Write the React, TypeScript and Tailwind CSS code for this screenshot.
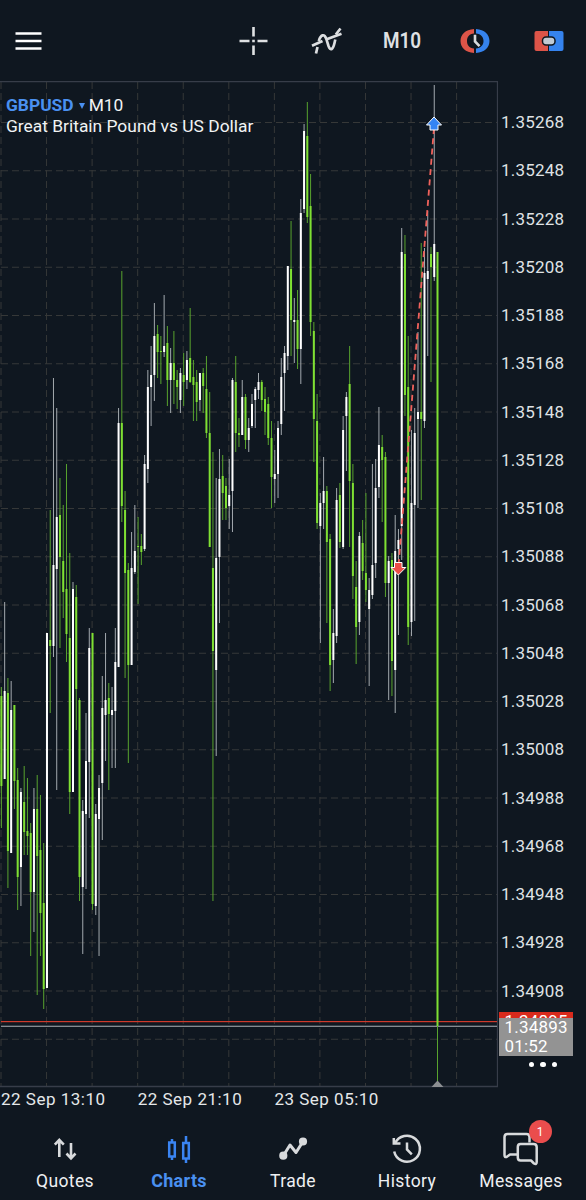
import type { ReactNode } from "react";

type Candle = ["up" | "down", number, number, number, number];

const U = "up";
const D = "down";

// side, high, body top, body bottom, low
const candles: Candle[] = [
  [D, 687, 696, 786, 828],
  [U, 602, 691, 779, 779],
  [D, 678, 693, 851, 888],
  [U, 681, 710, 853, 853],
  [D, 705, 705, 781, 809],
  [D, 768, 780, 877, 910],
  [U, 788, 792, 867, 906],
  [D, 766, 802, 832, 855],
  [D, 778, 831, 836, 855],
  [D, 823, 833, 892, 956],
  [U, 788, 809, 892, 932],
  [D, 775, 809, 856, 995],
  [D, 795, 850, 913, 956],
  [D, 843, 903, 989, 1009],
  [U, 633, 633, 988, 988],
  [D, 510, 640, 646, 713],
  [U, 378, 565, 646, 657],
  [U, 408, 517, 569, 790],
  [D, 478, 515, 557, 648],
  [D, 505, 561, 592, 618],
  [D, 464, 589, 634, 662],
  [D, 553, 638, 792, 814],
  [U, 582, 589, 792, 792],
  [D, 585, 597, 689, 730],
  [D, 698, 700, 877, 901],
  [U, 800, 811, 887, 954],
  [U, 713, 761, 814, 889],
  [U, 628, 648, 762, 818],
  [D, 633, 633, 904, 910],
  [U, 804, 814, 906, 915],
  [U, 775, 788, 819, 956],
  [U, 676, 708, 783, 840],
  [U, 633, 700, 715, 761],
  [D, 683, 698, 714, 790],
  [U, 687, 710, 715, 768],
  [U, 628, 662, 711, 768],
  [U, 408, 423, 667, 667],
  [D, 271, 423, 506, 522],
  [D, 491, 510, 573, 678],
  [D, 563, 570, 665, 763],
  [U, 532, 568, 665, 665],
  [U, 505, 551, 572, 574],
  [D, 517, 546, 547, 604],
  [D, 534, 546, 552, 565],
  [U, 455, 464, 549, 551],
  [U, 370, 387, 469, 483],
  [U, 346, 375, 387, 426],
  [U, 303, 336, 375, 401],
  [D, 325, 334, 352, 378],
  [D, 336, 351, 352, 384],
  [U, 295, 346, 352, 357],
  [D, 326, 343, 380, 406],
  [U, 348, 363, 380, 413],
  [D, 331, 363, 380, 404],
  [D, 370, 380, 387, 409],
  [U, 368, 373, 400, 413],
  [D, 353, 375, 382, 406],
  [U, 351, 360, 380, 389],
  [D, 308, 358, 382, 383],
  [D, 360, 377, 385, 421],
  [D, 370, 382, 402, 421],
  [U, 373, 373, 400, 411],
  [D, 368, 373, 386, 413],
  [D, 356, 389, 433, 438],
  [D, 392, 433, 547, 547],
  [D, 452, 568, 651, 901],
  [U, 478, 558, 670, 756],
  [U, 449, 479, 557, 623],
  [D, 455, 476, 493, 520],
  [D, 478, 486, 508, 520],
  [U, 459, 495, 506, 529],
  [U, 378, 380, 491, 532],
  [D, 356, 382, 433, 452],
  [D, 418, 433, 435, 447],
  [U, 380, 397, 435, 435],
  [D, 394, 397, 440, 449],
  [U, 418, 428, 440, 452],
  [U, 394, 404, 426, 428],
  [U, 387, 389, 400, 428],
  [U, 373, 382, 390, 399],
  [D, 380, 382, 400, 411],
  [D, 387, 399, 412, 435],
  [D, 397, 404, 438, 445],
  [D, 421, 438, 477, 508],
  [U, 450, 474, 479, 503],
  [U, 421, 428, 474, 498],
  [U, 358, 377, 424, 435],
  [U, 346, 353, 373, 411],
  [U, 266, 266, 356, 370],
  [D, 221, 269, 320, 356],
  [U, 298, 320, 322, 363],
  [D, 290, 320, 349, 369],
  [U, 199, 213, 349, 384],
  [U, 124, 131, 209, 213],
  [D, 102, 136, 217, 223],
  [D, 174, 206, 322, 336],
  [D, 322, 331, 419, 462],
  [D, 394, 421, 523, 529],
  [U, 493, 503, 526, 643],
  [U, 457, 491, 503, 529],
  [D, 486, 491, 542, 623],
  [D, 534, 539, 665, 691],
  [U, 609, 633, 660, 683],
  [U, 488, 500, 636, 643],
  [D, 483, 495, 542, 548],
  [U, 416, 430, 547, 549],
  [U, 392, 397, 416, 471],
  [D, 346, 384, 481, 547],
  [D, 464, 483, 576, 599],
  [D, 561, 587, 627, 664],
  [U, 532, 536, 622, 635],
  [D, 520, 543, 571, 580],
  [D, 493, 573, 590, 602],
  [U, 578, 590, 609, 686],
  [U, 464, 565, 595, 599],
  [U, 459, 488, 563, 578],
  [U, 407, 445, 487, 498],
  [D, 435, 447, 460, 522],
  [D, 452, 457, 583, 597],
  [U, 556, 561, 583, 700],
  [D, 553, 560, 661, 696],
  [U, 515, 551, 670, 713],
  [U, 529, 540, 549, 635],
  [U, 228, 252, 526, 560],
  [D, 235, 254, 395, 416],
  [D, 336, 387, 627, 645],
  [U, 430, 503, 622, 636],
  [U, 408, 433, 505, 621],
  [U, 332, 412, 419, 508],
  [D, 243, 412, 419, 500],
  [U, 248, 273, 421, 428],
  [U, 211, 271, 279, 356],
  [D, 247, 254, 267, 382],
  [U, 85, 244, 277, 281],
  [D, 252, 252, 1026, 1086],
];

const FIRST_X = 1.4;
const STEP = 3.2545;

const prices = Array.from({ length: 19 }, (_, i) => (1.35268 - i * 0.0002).toFixed(5));
const times = ["22 Sep 13:10", "22 Sep 21:10", "23 Sep 05:10"];

function Chart() {
  return (
    <svg width="498" height="1008" viewBox="0 81 498 1008" className="block shrink-0">
      <g stroke="#363838" strokeWidth="1" strokeDasharray="7 4">
        {Array.from({ length: 11 }, (_, i) => (
          <line key={i} x1={1 + i * 45.56} x2={1 + i * 45.56} y1="82" y2="1087" />
        ))}
        {Array.from({ length: 20 }, (_, i) => (
          <line key={i} x1="1" x2="497" y1={122.5 + i * 48.25} y2={122.5 + i * 48.25} />
        ))}
      </g>
      <path d="M0 81.5H497.5V1086.5H0" fill="none" stroke="#373d49" strokeWidth="1.3" />
      <rect x="1" y="1021" width="496" height="1.200" fill="#d03a2c" />
      <rect x="1" y="1025.700" width="496" height="1.200" fill="#939a9f" />

      {candles.map(([side, high, top, bottom, low], i) => {
        const x = FIRST_X + i * STEP;
        const up = side === "up";
        return (
          <g key={i}>
            <rect x={x - 0.5} y={high} width="1" height={low - high} fill={up ? "#a3a9ae" : "#58a32e"} />
            <rect
              x={x - 1}
              y={top}
              width="2"
              height={Math.max(bottom - top, 1)}
              fill={up ? "#ffffff" : "#7fe033"}
            />
          </g>
        );
      })}

      <path d="M434 128L398.5 566" stroke="#f0625c" strokeWidth="1.8" strokeDasharray="6 4.300" />
      <path
        d="M434 117L441.5 125H438V130H430V125H426.500Z"
        fill="#3384f4"
        stroke="#fff"
        strokeWidth="1"
      />
      <path
        d="M398.300 575L391 567.500H394.500V562.500H402V567.500H405.800Z"
        fill="#ee4e48"
        stroke="#fff"
        strokeWidth="1"
      />
      <path d="M437.500 1080.500L443.500 1087H431.500Z" fill="#8c8f92" />
    </svg>
  );
}

function Header() {
  return (
    <header className="relative h-[81px] shrink-0">
      <svg width="586" height="81" viewBox="0 0 586 81" fill="none" className="block">
        <path d="M15.500 33.500H41.500M15.500 41H41.500M15.500 48.500H41.500" stroke="#fff" strokeWidth="2.700" />
        <path
          d="M253.500 27V36.500M253.500 45.500V55M239.500 41H249.500M257.500 41H267.500M252.200 41H254.800"
          stroke="#dfe1e3"
          strokeWidth="2.600"
        />
        {/* indicators */}
        <g stroke="#dcdee0" strokeWidth="2.700">
          <path d="M312 45.800L322.500 41M326 39.600L341.500 33.800" />
          <path d="M316 53.500L317.500 47M318.800 41C320.500 35 324.500 32.500 326.500 39.500L328.500 46C330.500 51.500 333 49.500 334.500 43L335.300 39.500M335.800 34.500L340.500 28.500" />
        </g>
        {/* pending order clock */}
        <path d="M474 29V33.500C469 34 467 37 467 41S469 48 474 48.500V53C465.500 52.500 460.500 47.500 460.500 41S465.500 29.500 474 29Z" fill="#dd5448" />
        <path d="M476 29V33.500C481 34 483.500 37 483.500 41S481 48 476 48.500V53C484.500 52.500 489.500 47.500 489.500 41S484.500 29.500 476 29Z" fill="#3583ee" />
        <path d="M475 34.800V41.500L479.500 46.200" stroke="#d7dadd" strokeWidth="2.600" />
        {/* one click trading */}
        <path d="M536.500 31H548V51H536.500Q534.500 51 534.500 49V33Q534.500 31 536.500 31Z" fill="#dd5448" />
        <path d="M549 31H561.500Q563.500 31 563.500 33V49Q563.500 51 561.500 51H549Z" fill="#3583ee" />
        <rect x="542.500" y="37" width="12.500" height="8" rx="3.500" fill="#c1cad4" stroke="#0f1720" strokeWidth="1.500" />
      </svg>
      <span className="absolute left-[382.500px] top-[27px] origin-left scale-x-[0.88] text-[21.500px] leading-7 font-semibold text-[#dfe1e3]">
        M10
      </span>
    </header>
  );
}

function TabIcon({ children }: { children: ReactNode }) {
  return (
    <svg width="44" height="34" viewBox="-22 -17 44 34" fill="none" className="block">
      {children}
    </svg>
  );
}

const tabs = [
  {
    label: "Quotes",
    icon: (
      <path
        d="M-5.700 8V-8.500M-10.200-4.300L-5.700-9L-1.200-4.300M6-6V9M1.500 4.500L6 9.300L10.500 4.500"
        stroke="#d8dadc"
        strokeWidth="2.600"
      />
    ),
  },
  {
    label: "Charts",
    active: true,
    icon: (
      <g stroke="#3a84f2" strokeWidth="2.500">
        <path d="M-9.800-6.500H-4.200V7.500H-9.800ZM-7-10V-6.500M-7 7.500V11" />
        <path d="M4.200-6H9.800V9.500H4.200ZM7-13V-6M7 9.500V14" />
      </g>
    ),
  },
  {
    label: "Trade",
    icon: (
      <g stroke="#d8dadc" strokeWidth="3" strokeLinejoin="round">
        <path d="M-9.700 6.700L-3-4L3 3.500L10-7.500" />
        <circle cx="-9.700" cy="6.700" r="2.600" fill="#d8dadc" />
        <circle cx="10" cy="-7.500" r="2.600" fill="#d8dadc" />
      </g>
    ),
  },
  {
    label: "History",
    icon: (
      <g stroke="#d8dadc" strokeWidth="2.500">
        <path d="M-12.800 2.500A13 13 0 1 0-12-5.500" />
        <path d="M-13.200-11V-5.500H-6.500" />
        <path d="M0-6.500V.5L4.800 5.300" />
      </g>
    ),
  },
  {
    label: "Messages",
    badge: 1,
    icon: (
      <g stroke="#d8dadc" strokeWidth="2.500" strokeLinejoin="round">
        <path d="M-3.500 5.500H-11L-14.500 8Q-16.500 8.500-16.500 6V-12Q-16.500-15-13.500-15H5.500Q8.500-15 8.500-12V-6.500" />
        <path d="M-.5-5H12.500Q15.700-5 15.700-2V13Q15.700 16 13 14.500L10 11.500H-.5Q-3.200 11.500-3.200 8.500V-2Q-3.200-5-.5-5Z" />
      </g>
    ),
  },
];

function TabBar() {
  return (
    <nav className="grid grid-cols-5 px-2 pt-[19px]">
      {tabs.map((tab) => (
        <div key={tab.label} className="relative flex flex-col items-center">
          <TabIcon>{tab.icon}</TabIcon>
          {tab.badge && (
            <span className="absolute left-[64.500px] -top-[12px] flex size-[23px] items-center justify-center rounded-full bg-[#ea4d4d] text-xs text-white">
              {tab.badge}
            </span>
          )}
          <span
            className={
              tab.active
                ? "mt-[2.500px] text-[18px] leading-6 font-bold tracking-[0.3px] text-[#4a90f0]"
                : "mt-[2.500px] text-[17.500px] leading-6 tracking-[0.4px] text-[#eef0f2]"
            }
          >
            {tab.label}
          </span>
        </div>
      ))}
    </nav>
  );
}

export default function App() {
  return (
    <div className="flex h-[1200px] w-[586px] flex-col overflow-hidden bg-[#0f1720] font-['Roboto',sans-serif]">
      <Header />

      <main className="relative flex h-[1008px] shrink-0">
        <Chart />

        <div className="absolute left-[6px] top-[14px] text-[17.400px] leading-[21px] text-[#f2f4f5]">
          <div className="flex items-center">
            <span className="font-bold text-[#4a90f0]">GBPUSD</span>
            <svg width="6" height="6" viewBox="0 0 6 6" className="ml-[5px] mr-[4px]">
              <path d="M0 0H6L3 6Z" fill="#4a90f0" />
            </svg>
            M10
          </div>
          <div>Great Britain Pound vs US Dollar</div>
        </div>

        {/* price scale */}
        <div className="pl-[3px] pt-[18px] text-[17px] tracking-[0.2px] text-[#dfe2e5]">
          {prices.map((price) => (
            <div key={price} className="flex h-[48.25px] items-start leading-[49px]">
              <span className="-mt-px">{price}</span>
            </div>
          ))}
        </div>

        <div className="absolute left-[499px] top-[930.500px] w-[73.500px] text-[17px] tracking-[0.2px] text-white">
          <div className="h-[6px] overflow-hidden bg-[#d92a1c] pl-[5.500px] leading-[18px]">1.34895</div>
          <div className="h-[38px] bg-[#939393] pl-[5.500px] leading-[19px]">
            <div>1.34893</div>
            <div>01:52</div>
          </div>
        </div>
        <div className="absolute left-[528.500px] top-[980.500px] flex gap-[6px]">
          <i className="size-[5.500px] rounded-full bg-white" />
          <i className="size-[5.500px] rounded-full bg-white" />
          <i className="size-[5.500px] rounded-full bg-white" />
        </div>
      </main>

      <div className="flex h-[24px] shrink-0 pl-px text-[17px] leading-[21px] tracking-[0.5px] text-[#e4e7e9]">
        {times.map((time) => (
          <span key={time} className="w-[136.700px]">
            {time}
          </span>
        ))}
      </div>

      <TabBar />
    </div>
  );
}
